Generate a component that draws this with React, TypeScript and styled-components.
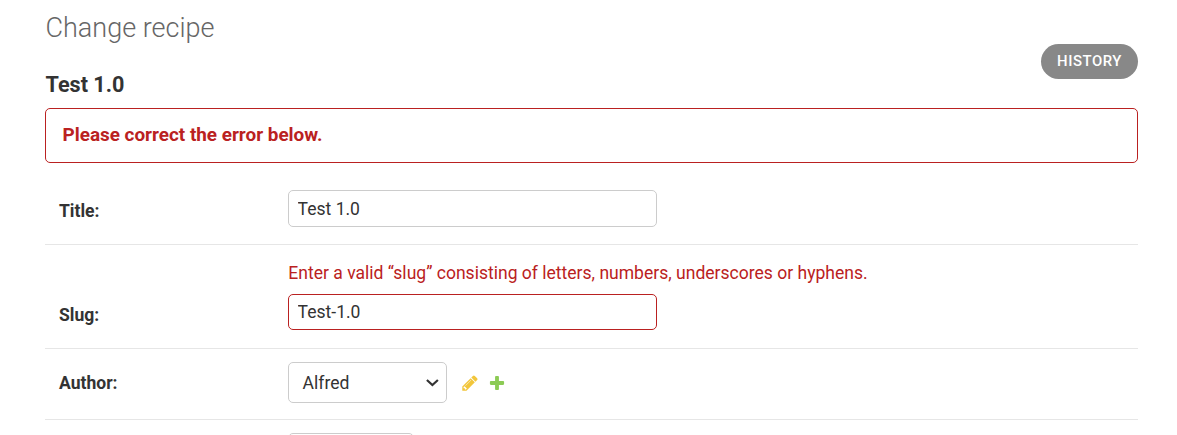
import React from "react";
import styled, { createGlobalStyle } from "styled-components";

const GlobalStyle = createGlobalStyle`
  *, *::before, *::after { box-sizing: border-box; }
  html, body { margin: 0; height: 435px; overflow: hidden; background: #fff; }
  body { font-family: Roboto, "Liberation Sans", sans-serif; color: #333; }
`;

const Page = styled.main`
  width: 1177px;
  height: 435px;
  overflow: hidden;
  padding: 8px 39px 0 45px;
`;

const Heading = styled.h1`
  margin: 0;
  padding-left: 0.5px;
  height: 36px;
  line-height: 40px;
  font-size: 27px;
  font-weight: 300;
  color: #666;
`;

const TitleBar = styled.div`
  display: flex;
  justify-content: space-between;
  height: 64px;
`;

const ObjectName = styled.h2`
  margin: 26px 0 0;
  padding-left: 0.5px;
  line-height: 30px;
  font-size: 21.6px;
  font-weight: 700;
`;

const HistoryButton = styled.a`
  width: 97px;
  height: 35px;
  border-radius: 18px;
  background: #888;
  color: #fff;
  font-size: 14.9px;
  font-weight: 500;
  letter-spacing: 0.55px;
  line-height: 34px;
  text-align: center;
`;

const ErrorNote = styled.p`
  margin: 0;
  height: 55px;
  padding: 0 16.5px;
  border: 1px solid #ba2121;
  border-radius: 5px;
  color: #ba2121;
  font-size: 18.9px;
  font-weight: 700;
  line-height: 51px;
`;

const Row = styled.div<{ $height: number; $top: number }>`
  display: flex;
  height: ${(p) => p.$height}px;
  padding: ${(p) => p.$top}px 0 0 14px;
  border-bottom: 1px solid #e6e6e6;
`;

const Label = styled.label<{ $offset: number }>`
  flex: 0 0 229px;
  padding-top: ${(p) => p.$offset}px;
  font-size: 17.55px;
  font-weight: 700;
  line-height: 24px;
`;

const Field = styled.div`
  display: flex;
  flex-direction: column;
`;

const FieldError = styled.div`
  height: 32px;
  padding-left: 0.3px;
  color: #ba2121;
  font-size: 17.55px;
  line-height: 22px;
`;

const TextInput = styled.input<{ $invalid?: boolean }>`
  width: 369px;
  height: ${(p) => (p.$invalid ? 36 : 37)}px;
  margin: 0;
  padding: 0 8.6px ${(p) => (p.$invalid ? 1 : 0)}px;
  border: 1px solid ${(p) => (p.$invalid ? "#ba2121" : "#ccc")};
  border-radius: 5px;
  background: #fff;
  color: #333;
  font: 400 17.55px Roboto, "Liberation Sans", sans-serif;
  outline: none;
`;

const Related = styled.div`
  display: flex;
  height: 41px;
  align-items: center;
`;

const Select = styled.button<{ $width: number }>`
  display: flex;
  align-items: center;
  justify-content: space-between;
  width: ${(p) => p.$width}px;
  height: 41px;
  padding: 0 7px 0 13.6px;
  border: 1px solid #ccc;
  border-radius: 5px;
  background: #fff;
  color: #333;
  font: 400 17.55px Roboto, "Liberation Sans", sans-serif;
  text-align: left;
`;

const IconLink = styled.a<{ $gap: number }>`
  display: flex;
  margin: 1px 0 0 ${(p) => p.$gap}px;
  opacity: 0.8;
`;

const PencilIcon = () => (
  <svg width="18" height="18" viewBox="0 0 1792 1792">
    <path
      fill="#efb80b"
      d="M491 1536l91-91-235-235-91 91v107h128v128h107zm523-928q0-22-22-22-10 0-17 7l-542 542q-7 7-7 17 0 22 22 22 10 0 17-7l542-542q7-7 7-17zm-54-192l416 416-832 832h-416v-416zm683 96q0 53-37 90l-166 166-416-416 166-165q36-38 90-38 53 0 91 38l235 234q37 39 37 91z"
    />
  </svg>
);

const PlusIcon = () => (
  <svg width="18" height="18" viewBox="0 0 1792 1792">
    <path
      fill="#70bf2b"
      d="M1600 796v192q0 40-28 68t-68 28h-416v416q0 40-28 68t-68 28h-192q-40 0-68-28t-28-68v-416h-416q-40 0-68-28t-28-68v-192q0-40 28-68t68-28h416v-416q0-40 28-68t68-28h192q40 0 68 28t28 68v416h416q40 0 68 28t28 68z"
    />
  </svg>
);

const Chevron = () => (
  <svg width="14" height="10" viewBox="0 0 14 10" fill="none">
    <path d="M1.9 2L7.4 7L12.9 2" stroke="#333" strokeWidth="2.2" />
  </svg>
);

export default function App() {
  return (
    <>
      <GlobalStyle />
      <Page>
        <Heading>Change recipe</Heading>
        <TitleBar>
          <ObjectName>Test 1.0</ObjectName>
          <HistoryButton>HISTORY</HistoryButton>
        </TitleBar>
        <ErrorNote>Please correct the error below.</ErrorNote>
        <Row $height={82} $top={27}>
          <Label $offset={9} htmlFor="title">Title:</Label>
          <Field>
            <TextInput id="title" defaultValue="Test 1.0" />
          </Field>
        </Row>
        <Row $height={104} $top={17}>
          <Label $offset={41} htmlFor="slug">Slug:</Label>
          <Field>
            <FieldError>Enter a valid “slug” consisting of letters, numbers, underscores or hyphens.</FieldError>
            <TextInput id="slug" $invalid defaultValue="Test-1.0" />
          </Field>
        </Row>
        <Row $height={71} $top={13}>
          <Label $offset={9}>Author:</Label>
          <Related>
            <Select $width={159}>
              Alfred
              <Chevron />
            </Select>
            <IconLink $gap={14}><PencilIcon /></IconLink>
            <IconLink $gap={9}><PlusIcon /></IconLink>
          </Related>
        </Row>
        <Row $height={71} $top={13}>
          <Label $offset={9} />
          <Related>
            <Select $width={126} />
          </Related>
        </Row>
      </Page>
    </>
  );
}
